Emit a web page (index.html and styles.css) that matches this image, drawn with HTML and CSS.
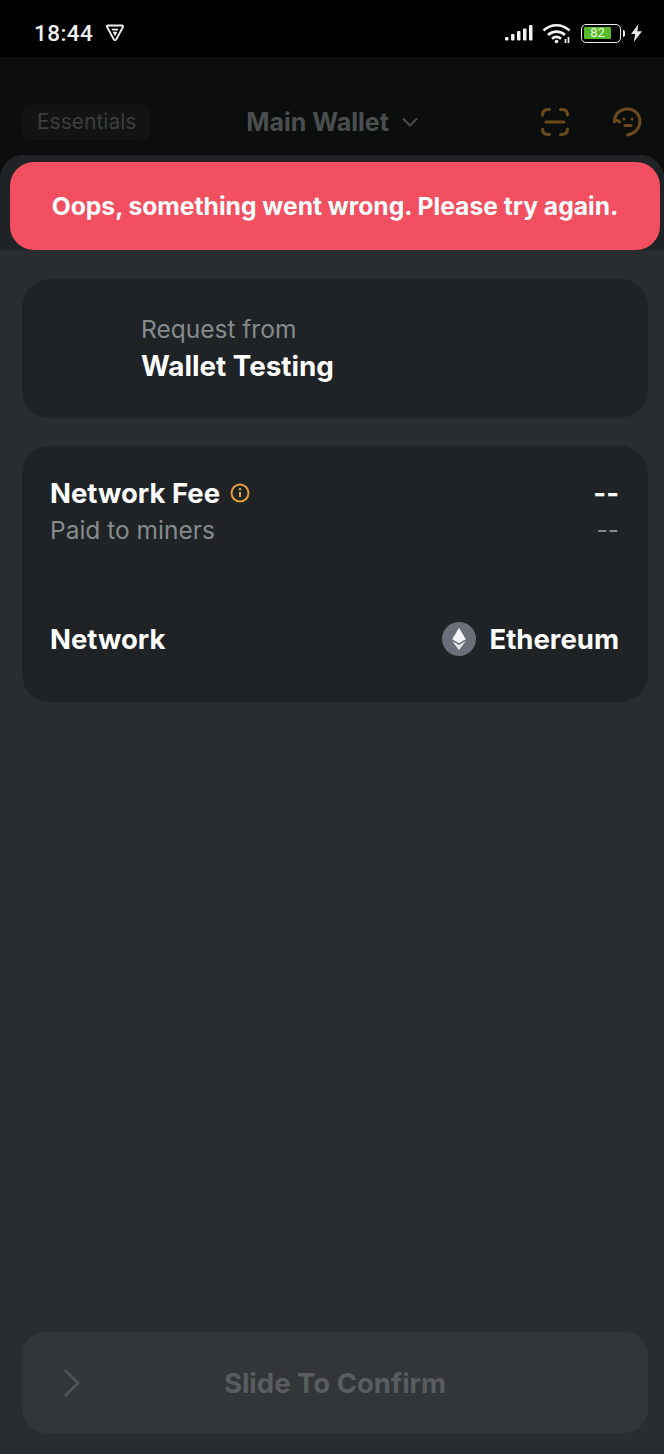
FILE: index.html
```html
<!DOCTYPE html>
<html lang="en">
<head>
  <meta charset="UTF-8" />
  <meta name="viewport" content="width=device-width, initial-scale=1" />
  <title>Wallet Request</title>
  <link rel="stylesheet" href="styles.css">
</head>
<body>
  <div class="status-bar">
    <div class="status-left">
      <span class="clock">18:44</span>
      <svg class="vpn" width="20" height="18" viewBox="0 0 20 18">
        <path d="M3 1.500h14q1.600 0 .9 1.500L11.200 15.500q-1.200 1.500-2.400 0L2.100 3Q1.400 1.500 3 1.500z" fill="none" stroke="#f0f0f0" stroke-width="1.800"/>
        <path d="M6.500 4.800h7l-.9 1.800H7.400zM7.700 7.800h4.600L10 12.200z" fill="#f0f0f0"/>
      </svg>
    </div>
    <div class="status-right">
      <svg width="28" height="16" viewBox="0 0 28 16" fill="#f2f2f2">
        <rect x="0" y="12" width="3.500" height="3.500" rx="1"/>
        <rect x="6" y="9" width="3.500" height="6.500" rx="1"/>
        <rect x="12" y="6" width="3.500" height="9.500" rx="1"/>
        <rect x="18" y="3.500" width="3.500" height="12" rx="1"/>
        <rect x="24" y="0" width="3.500" height="15.500" rx="1"/>
      </svg>
      <svg class="wifi" width="29" height="21" viewBox="0 0 29 21" fill="none" stroke="#f2f2f2" stroke-width="2.600">
        <path d="M1.500 7.500c7.500-7 18.500-7 26 0"/>
        <path d="M6 12c5-4.500 12-4.500 17 0"/>
        <path d="M10 15.800c2.700-2.200 6.300-2.200 9 0"/>
        <circle cx="14.500" cy="18.500" r="1.800" fill="#f2f2f2" stroke="none"/>
        <path d="M23.500 20v-4M26.500 20v-6" stroke-width="1.700"/>
      </svg>
      <div class="battery">
        <div class="battery-body"><div class="battery-fill">82</div></div>
        <div class="battery-cap"></div>
      </div>
      <svg width="13" height="18" viewBox="0 0 13 18"><path d="M8.500 0 1 10h4.200L3.800 18 12 7.300H7.300z" fill="#e8e8e8"/></svg>
    </div>
  </div>

  <div class="top-bar">
    <div class="tag">Essentials</div>
    <div class="wallet-name">
      Main Wallet
      <svg width="16" height="10" viewBox="0 0 16 10" fill="none" stroke="#4b4e4f" stroke-width="2"><path d="M1 1.500 8 8.500l7-7"/></svg>
    </div>
    <div class="top-icons">
      <svg width="30" height="30" viewBox="0 0 30 30" fill="none" stroke="#6b4a1c" stroke-width="3" stroke-linecap="round">
        <path d="M2.500 8q0-5.500 5.500-5.500h1.500M20.500 2.500H22q5.500 0 5.500 5.500M2.500 22q0 5.500 5.500 5.500h1.500M20.500 27.500H22q5.500 0 5.500-5.500M6 15h18"/>
      </svg>
      <svg width="30" height="30" viewBox="0 0 30 30" fill="none" stroke="#6b4a1c" stroke-width="3" stroke-linecap="round">
        <path d="M2.500 14.500C2.500 7 8 2 15.500 2S28 8 28 14.500 22.500 27 15.500 28"/>
        <path d="M2.500 14.500c1.800-1.500 4-1.200 5 .5"/>
        <circle cx="12" cy="12" r="1.500" fill="#6b4a1c" stroke="none"/>
        <circle cx="20" cy="12" r="1.500" fill="#6b4a1c" stroke="none"/>
        <path d="M13 18.500h6"/>
      </svg>
    </div>
  </div>

  <div class="sheet">
    <div class="toast">Oops, something went wrong. Please try again.</div>
    <div class="sheet-head"></div>

    <div class="card request">
      <div class="muted">Request from</div>
      <div class="strong">Wallet Testing</div>
    </div>

    <div class="card fee">
      <div class="row">
        <div class="strong fee-title">
          Network Fee
          <svg width="20" height="20" viewBox="0 0 20 20" fill="none" stroke="#e2a03a" stroke-width="2">
            <circle cx="10" cy="10" r="8.500"/>
            <path d="M10 9v5"/>
            <circle cx="10" cy="6" r="1.200" fill="#e2a03a" stroke="none"/>
          </svg>
        </div>
        <div class="strong">--</div>
      </div>
      <div class="row sub-row">
        <div class="muted">Paid to miners</div>
        <div class="muted">--</div>
      </div>
      <div class="row network-row">
        <div class="strong">Network</div>
        <div class="network">
          <svg width="34" height="34" viewBox="0 0 35 35">
            <circle cx="17.500" cy="17.500" r="17.500" fill="#6a6e78"/>
            <path d="M17.500 6 10.500 17.800 17.500 22 24.500 17.800z" fill="#f4f4f6"/>
            <path d="M10.500 19.600 17.500 29 24.500 19.600 17.500 23.800z" fill="#e4e4e8"/>
          </svg>
          <span class="strong">Ethereum</span>
        </div>
      </div>
    </div>

    <div class="slider">
      <svg class="slider-arrow" width="18" height="30" viewBox="0 0 18 30" fill="none" stroke="#4e5254" stroke-width="3"><path d="M2 2l13 13L2 28"/></svg>
      <span>Slide To Confirm</span>
    </div>
  </div>
</body>
</html>
```

FILE: styles.css
```css
* {
  box-sizing: border-box;
}
html, body {
  height: 100%;
}
body {
  margin: 0;
  background: #0c0e0e;
  font-family: Inter, 'Noto Sans', sans-serif;
  display: flex;
  flex-direction: column;
  overflow: hidden;
}

/* status bar */
.status-bar {
  height: 57px;
  flex: none;
  background: #000;
  display: flex;
  justify-content: space-between;
  align-items: center;
  padding: 9px 21px 0 34px;
  color: #f0f0f0;
}
.status-left, .status-right {
  display: flex;
  align-items: center;
}
.clock {
  font-family: Roboto, sans-serif;
  font-size: 22.500px;
  font-weight: 500;
  letter-spacing: 0.4px;
}
.vpn {
  margin-left: 12px;
}
.status-right .wifi {
  margin-left: 9px;
}
.battery {
  display: flex;
  align-items: center;
  margin-left: 10px;
  margin-right: 5px;
}
.battery-body {
  width: 40px;
  height: 19px;
  border: 1.5px solid #ececec;
  border-radius: 5px;
  padding: 2px;
}
.battery-fill {
  width: 27px;
  height: 12px;
  background: #57b92c;
  border-radius: 1px;
  color: #e6f7dc;
  font-family: Roboto, sans-serif;
  font-size: 13px;
  line-height: 12px;
  text-align: center;
}
.battery-cap {
  width: 2px;
  height: 7px;
  margin-left: 2px;
  background: #ececec;
  border-radius: 0 2px 2px 0;
}

/* header behind the overlay */
.top-bar {
  height: 98px;
  flex: none;
  display: grid;
  grid-template-columns: 1fr auto 1fr;
  align-items: center;
  padding: 32px 22px 0;
}
.tag {
  justify-self: start;
  background: #121414;
  color: #3b3e3f;
  font-size: 21px;
  line-height: 36px;
  padding: 0 15px;
  border-radius: 9px;
}
.wallet-name {
  display: flex;
  align-items: center;
  gap: 13px;
  color: #4b4e4f;
  font-size: 25px;
  font-weight: 700;
}
.top-icons {
  justify-self: end;
  display: flex;
  gap: 42px;
}

/* sheet */
.sheet {
  position: relative;
  flex: 1;
  background: #2a2d30;
  border-radius: 24px 24px 0 0;
  display: flex;
  flex-direction: column;
  overflow: hidden;
}
.sheet-head {
  height: 95px;
  flex: none;
  background: #1f2325;
}
.toast {
  position: absolute;
  top: 7px;
  left: 10px;
  right: 4px;
  height: 88px;
  display: flex;
  align-items: center;
  justify-content: center;
  background: #f24f60;
  color: #fff;
  border-radius: 24px;
  font-size: 24.650px;
  font-weight: 700;
}
.card {
  margin: 0 16px 28px 22px;
  background: #202325;
  border-radius: 28px;
}
.request {
  margin-top: 29px;
  height: 139px;
  padding: 35px 0 0 119px;
}
.muted {
  color: #868b8d;
  font-size: 24.500px;
  line-height: 30px;
}
.strong {
  color: #fff;
  font-size: 27.500px;
  font-weight: 700;
  line-height: 40px;
}
.request .strong {
  margin-top: 2px;
  font-size: 27.800px;
}
.fee {
  height: 256px;
  padding: 27px 29px 0 28px;
}
.row {
  display: flex;
  justify-content: space-between;
  align-items: center;
}
.fee-title {
  display: flex;
  align-items: center;
  gap: 10px;
}
.sub-row {
  margin-top: 2px;
}
.network-row {
  margin-top: 74px;
}
.network {
  display: flex;
  align-items: center;
  gap: 14px;
}
.slider {
  position: relative;
  margin: auto 16px 21px 22px;
  height: 101px;
  background: #323638;
  border-radius: 24px;
  display: flex;
  align-items: center;
  justify-content: center;
  color: #595d5f;
  font-size: 27.500px;
  font-weight: 700;
}
.slider-arrow {
  position: absolute;
  left: 41px;
  top: 36px;
}
```
